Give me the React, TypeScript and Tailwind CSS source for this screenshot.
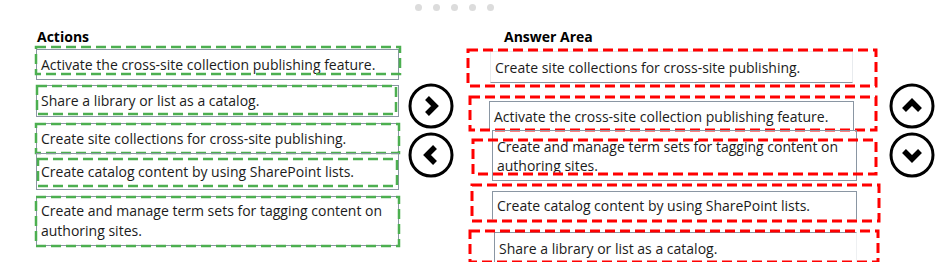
import React from "react";

type Off = { t: number; r: number; b: number; l: number };

const Dashed = ({ off, color, w, dash }: { off: Off; color: string; w: number; dash: string }) => (
    <svg
        className="absolute pointer-events-none overflow-visible"
        style={{ top: off.t, right: off.r, bottom: off.b, left: off.l, width: `calc(100% - ${off.l + off.r}px)`, height: `calc(100% - ${off.t + off.b}px)` }}
        aria-hidden="true"
    >
        <rect x="0" y="0" width="100%" height="100%" fill="none" stroke={color} strokeWidth={w} strokeDasharray={dash} />
    </svg>
);

const leftItems = [
    { text: "Activate the cross-site collection publishing feature.", cls: "mt-0 h-[31px]", off: { t: -3, r: -2, b: 5, l: -1 } },
    { text: "Share a library or list as a catalog.", cls: "mt-[5px] h-[32px]", off: { t: 0, r: 2, b: 2, l: 0 } },
    { text: "Create site collections for cross-site publishing.", cls: "mt-[6px] h-[31px]", off: { t: 0, r: -1, b: 0, l: -1 } },
    { text: "Create catalog content by using SharePoint lists.", cls: "-mt-px h-[37px]", off: { t: 5, r: 1, b: 3, l: 1 } },
    { text: "Create and manage term sets for tagging content on authoring sites.", cls: "mt-[6px] h-[50px]", off: { t: 0, r: -1, b: -1, l: -1 } },
];

const rightItems = [
    { text: "Create site collections for cross-site publishing.", cls: "mt-0 h-[32px] ml-0 w-[363px] border-[#e8ebee] border-b-[#8a96a3]", off: { t: -2, r: -24, b: -4, l: -23 } },
    { text: "Activate the cross-site collection publishing feature.", cls: "mt-[18px] h-[30px] -ml-px w-[365px] border-[#8a96a3] border-b-transparent", off: { t: -5, r: -23, b: 0, l: -20 } },
    { text: "Create and manage term sets for tagging content on authoring sites.", cls: "-mt-px h-[51px] ml-[2px] w-[365px] border-[#8a96a3]", off: { t: 9, r: -20, b: 6, l: -20 } },
    { text: "Create catalog content by using SharePoint lists.", cls: "mt-[10px] h-[29px] ml-[2px] w-[365px] border-[#8a96a3] border-b-transparent", off: { t: -7, r: -23, b: -2, l: -21 } },
    { text: "Share a library or list as a catalog.", cls: "mt-[12px] h-[33px] ml-[4px] w-[363px] border-[#8a96a3] border-b-transparent border-r-[#eef0f2]", off: { t: -2, r: -22, b: 2, l: -25 } },
];

const ArrowBtn = ({ d }: { d: string }) => (
    <svg width="46" height="46" viewBox="0 0 46 46" aria-hidden="true">
        <circle cx="23" cy="23" r="21" fill="white" stroke="black" strokeWidth="3" />
        <path d={d} fill="none" stroke="black" strokeWidth="5.5" strokeLinecap="butt" strokeLinejoin="miter" />
    </svg>
);

export default function App() {
    return (
        <div className="w-[943px] h-[262px] overflow-hidden bg-white text-[#1b1b1b] font-['Segoe_UI','Open_Sans',sans-serif] text-[14px]">
            {/* pager dots */}
            <div className="flex gap-[11px] pl-[415px] pt-[4px] h-[11px]">
                {[0, 1, 2, 3, 4].map((i) => (
                    <div key={i} className="w-[7px] h-[7px] rounded-full bg-[#dcdcdc]" />
                ))}
            </div>
            <div className="flex pt-[17px]">
                {/* Actions */}
                <div className="ml-[36px] w-[363px] flex flex-col">
                    <h2 className="h-[21px] pl-px text-[14px] font-bold leading-[18px] text-black">Actions</h2>
                    {leftItems.map((it, i) => (
                        <div key={i} className={`relative flex items-center border border-[#8a96a3] pl-[4px] leading-[20px] ${it.cls}`}>
                            <span>{it.text}</span>
                            <Dashed off={it.off} color="#4caf50" w={2.5} dash="10 5" />
                        </div>
                    ))}
                </div>
                <div className="ml-[9px] mt-[55px] flex flex-col gap-[3px]">
                    <ArrowBtn d="M19 15 L27 23 L19 31" />
                    <ArrowBtn d="M27 15 L19 23 L27 31" />
                </div>
                {/* Answer Area */}
                <div className="ml-[36px] w-[370px] flex flex-col">
                    <h2 className="h-[23px] ml-[14px] text-[14px] font-bold leading-[18px] text-black">Answer Area</h2>
                    {rightItems.map((it, i) => (
                        <div key={i} className={`relative flex items-center border pl-[4px] leading-[19px] ${it.cls}`}>
                            <span>{it.text}</span>
                            <Dashed off={it.off} color="#ff0000" w={3} dash="10 5" />
                        </div>
                    ))}
                </div>
                <div className="ml-[29px] mt-[55px] flex flex-col gap-[3px]">
                    <ArrowBtn d="M15 27 L23 19 L31 27" />
                    <ArrowBtn d="M15 19 L23 27 L31 19" />
                </div>
            </div>
        </div>
    );
}
